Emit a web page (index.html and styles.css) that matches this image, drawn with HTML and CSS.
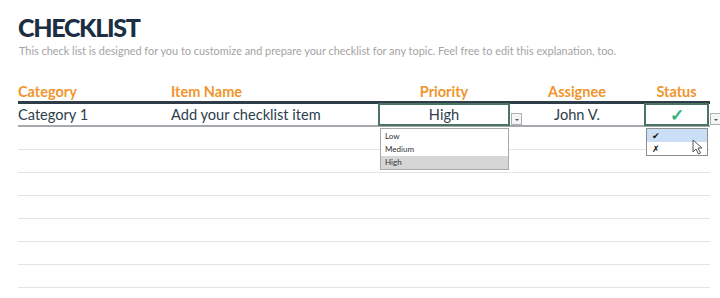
FILE: index.html
```html
<!DOCTYPE html>
<html>
<head>
<meta name="viewport" content="width=device-width, initial-scale=1">
<link rel="stylesheet" href="styles.css">
</head>
<body>
<div class="page">
  <h1 class="title">CHECKLIST</h1>
  <p class="intro">This check list is designed for you to customize and prepare your checklist for any topic. Feel free to edit this explanation, too.</p>

  <!-- checklist table -->
  <div class="sheet">
    <div class="row head">
      <div class="cell">Category</div>
      <div class="cell">Item Name</div>
      <div class="cell mid">Priority</div>
      <div class="cell mid">Assignee</div>
      <div class="cell mid">Status</div>
    </div>
    <div class="row first">
      <div class="cell">Category 1</div>
      <div class="cell">Add your checklist item</div>
      <div class="cell mid sel">High
        <span class="dd-btn"></span>
        <ul class="list prio">
          <li>Low</li>
          <li>Medium</li>
          <li class="on">High</li>
        </ul>
      </div>
      <div class="cell mid">John V.</div>
      <div class="cell mid sel check">&#10003;
        <span class="dd-btn cut"></span>
        <ul class="list stat">
          <li class="hover">&#10004;</li>
          <li>&#10007;</li>
        </ul>
        <svg class="cursor" width="11" height="16" viewBox="0 0 11 16">
          <path d="M1 1 L1 13 L4 10 L6.5 15 L8.5 14 L6 9 L10 9 Z" fill="#fff" stroke="#555" stroke-width="1"/>
        </svg>
      </div>
    </div>
    <div class="row"></div>
    <div class="row"></div>
    <div class="row"></div>
    <div class="row"></div>
    <div class="row"></div>
    <div class="row"></div>
    <div class="row"></div>
  </div>
</div>
</body>
</html>
```

FILE: styles.css
```css
body {
  margin: 0;
  background: #fff;
  font-family: "Lato", "Open Sans", sans-serif;
}
.page {
  padding: 13px 10px 0 18px;
}
.title {
  margin: 0;
  font-size: 25px;
  font-weight: 900;
  color: #1b2e42;
  letter-spacing: -1.3px;
  line-height: 28px;
}
.intro {
  margin: 3px 0 0 1px;
  font-size: 10.9px;
  color: #a4a4a4;
  line-height: 14px;
}
.sheet {
  margin-top: 24px;
  width: 692px;
}
.row {
  display: grid;
  grid-template-columns: 153px 208px 130px 136px 63px;
  height: 22px;
  border-bottom: 1px solid #e4e4e4;
}
.row.head {
  height: 19px;
  border-bottom: 3px solid #2f3d48;
}
.row.first {
  height: 21px;
  border-bottom: 2px solid #a5a9ad;
}
.cell {
  position: relative;
  display: flex;
  align-items: center;
  font-size: 14.6px;
  color: #2d3e4c;
  white-space: nowrap;
}
.head .cell {
  color: #f0952c;
  font-weight: 700;
  font-size: 14.5px;
}
.mid {
  justify-content: center;
}
.sel {
  outline: 2px solid #4b7562;
  outline-offset: -1px;
}
.check {
  color: #2db57b;
  font-weight: 700;
  font-size: 17px;
}
.dd-btn {
  position: absolute;
  right: -13px;
  top: 9px;
  width: 9px;
  height: 10px;
  border: 1px solid #b0b0b0;
  background: #f4f4f4;
}
.dd-btn::after {
  content: "";
  position: absolute;
  left: 3px;
  top: 5px;
  border-left: 2px solid transparent;
  border-right: 2px solid transparent;
  border-top: 2px solid #555;
}
.dd-btn.cut {
  right: -12px;
  border-right: none;
}
.list {
  position: absolute;
  left: 1px;
  top: 24px;
  margin: 0;
  padding: 0;
  list-style: none;
  background: #fff;
  border: 1px solid #a8a8a8;
  box-sizing: border-box;
  z-index: 2;
}
.list li {
  font-size: 8px;
  font-weight: 400;
  color: #333;
  line-height: 13px;
  padding-left: 4px;
  text-align: left;
}
.prio {
  width: 129px;
  padding-top: 1px;
}
.list li.on {
  background: #d6d6d6;
}
.stat {
  width: 62px;
  border-color: #8e8e8e;
}
.stat li {
  color: #111;
  font-size: 9px;
  padding-left: 5px;
}
.list li.hover {
  background: #cadff5;
}
.cursor {
  position: absolute;
  left: 47px;
  top: 35px;
  z-index: 3;
}
```
